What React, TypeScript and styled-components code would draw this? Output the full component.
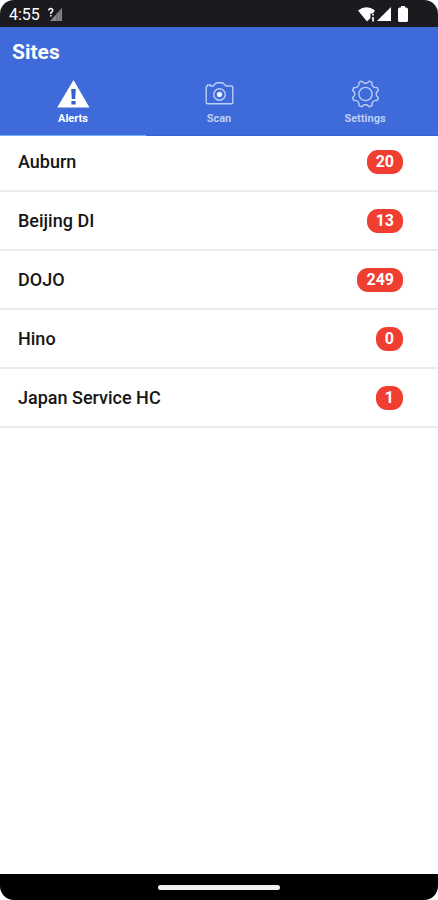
import React from "react";
import styled, { createGlobalStyle } from "styled-components";

const Global = createGlobalStyle`
  *, *::before, *::after { box-sizing: border-box; }
  body { margin: 0; background: #fff; font-family: Roboto, "Liberation Sans", sans-serif; }
`;

const Phone = styled.div`
  display: flex;
  flex-direction: column;
  min-height: 100vh;
  border-radius: 14px;
  overflow: hidden;
  background: #fff;
`;

const StatusBar = styled.div`
  display: flex;
  align-items: center;
  justify-content: space-between;
  height: 27px;
  padding: 1px 30px 0 9px;
  background: #1b1b1f;
  color: #fff;
  font-size: 16px;
`;

const StatusGroup = styled.div<{ $gap: number }>`
  display: flex;
  align-items: center;
  gap: ${(p) => p.$gap}px;
`;

const Header = styled.header`
  background: #3e6bd9;
  color: #fff;
`;

const Title = styled.h1`
  margin: 0;
  padding: 12px 12px 0;
  font-size: 21px;
  line-height: 26px;
  font-weight: 700;
`;

const Tabs = styled.nav`
  display: grid;
  grid-template-columns: repeat(3, 1fr);
`;

const Tab = styled.button<{ $active?: boolean }>`
  display: flex;
  flex-direction: column;
  align-items: center;
  gap: 4px;
  height: 71px;
  padding: 15px 0 0;
  border: 0;
  border-bottom: 1px solid ${(p) => (p.$active ? "#6fb0ff" : "#3563d4")};
  background: none;
  color: ${(p) => (p.$active ? "#fff" : "#bccdf6")};
  font: 700 11px/14px Roboto, "Liberation Sans", sans-serif;
`;

const List = styled.ul`
  flex: 1;
  margin: 0;
  padding: 0;
  list-style: none;
`;

const Row = styled.li`
  display: flex;
  align-items: center;
  justify-content: space-between;
  padding: 17px 35px 16px 18px;
  border-bottom: 2px solid #ececed;
  color: #161616;
  font-size: 18px;
  line-height: 24px;
  font-weight: 500;
  &:first-child { padding-top: 14px; }
`;

const Badge = styled.span`
  min-width: 27px;
  padding: 0 9px;
  border-radius: 11px;
  background: #f03e30;
  color: #fff;
  font-size: 16px;
  line-height: 24px;
  font-weight: 700;
  text-align: center;
`;

const NavBar = styled.div`
  display: flex;
  justify-content: center;
  align-items: center;
  height: 26px;
  background: #000;
`;

const Handle = styled.div`
  width: 28%;
  height: 5px;
  border-radius: 3px;
  background: #f2f2f2;
`;

const AlertIcon = () => (
  <svg width="34" height="28" viewBox="0 0 34 28" aria-hidden="true">
    <path d="M17.500 0 33.500 27.500H1.200Z" fill="#fff" />
    <path d="M15.200 9h4.600l-.6 10h-3.400zM15.400 21h4.200v3.400h-4.200z" fill="#3460cf" />
  </svg>
);

const CameraIcon = () => (
  <svg width="34" height="28" viewBox="0 0 34 28" fill="none" stroke="currentColor" strokeWidth="1.4" strokeLinejoin="round" aria-hidden="true">
    <path d="M5.500 6V5h3v1h2.600l2.700-2.700q.6-.6 1.400-.6h4.600q.8 0 1.400.6L23.900 6H29.500q1.300 0 1.300 1.300v15.200q0 1.300-1.300 1.300h-24q-1.300 0-1.300-1.300V7.300Q4.200 6 5.500 6Z" />
    <circle cx="17.500" cy="14.500" r="5.800" />
    <circle cx="17.500" cy="14.500" r="2" fill="#fff" stroke="#dfe8ff" />
  </svg>
);

const gearPoint = (degrees: number, radius: number) => {
  const a = (degrees * Math.PI) / 180;
  return `${(14.5 + radius * Math.sin(a)).toFixed(2)} ${(14 - radius * Math.cos(a)).toFixed(2)}`;
};

const gearOutline =
  Array.from({ length: 8 }, (_, i) => {
    const a = i * 45;
    return `${i ? "L" : "M"}${gearPoint(a - 16, 13.4)}Q${gearPoint(a - 11, 10.6)} ${gearPoint(a, 10.8)}Q${gearPoint(a + 11, 10.6)} ${gearPoint(a + 16, 13.4)}`;
  }).join("") + "Z";

const GearIcon = () => (
  <svg width="29" height="28" viewBox="0 0 29 28" fill="none" stroke="currentColor" strokeWidth="1.4" strokeLinejoin="round" aria-hidden="true">
    <path d={gearOutline} />
    <circle cx="14.500" cy="14" r="6.600" />
  </svg>
);

const NoSignalIcon = () => (
  <svg width="15" height="15" viewBox="0 0 15 15" aria-hidden="true">
    <path d="M14 1v13H2Z" fill="#88888c" />
    <path d="M9 6v8M12 3v11" stroke="#5d5d62" />
    <path d="M.8 3.500Q.9 1.500 2.800 1.500T4.700 3.400Q4.700 4.500 2.900 5.600V7M2.900 8v1.500" fill="none" stroke="#fff" strokeWidth="1.500" />
  </svg>
);

const WifiIcon = () => (
  <svg width="18" height="16" viewBox="0 0 18 16" aria-hidden="true">
    <path d="M0 4.500Q8.500-2 17 4.500L15 7.500H12.500V12L9 15.500Z" fill="#fff" />
    <path d="M15 8v1.500M15 11v4.500" stroke="#ddd" strokeWidth="2" />
  </svg>
);

const SignalIcon = () => (
  <svg width="14" height="14" viewBox="0 0 14 14" aria-hidden="true">
    <path d="M14 0v14H0Z" fill="#fff" />
  </svg>
);

const BatteryIcon = () => (
  <svg width="10" height="16" viewBox="0 0 10 16" aria-hidden="true">
    <path d="M3 0h4v1.500h1.500Q10 2 10 3.500v11Q10 16 8.500 16h-7Q0 16 0 14.500v-11Q0 2 1.500 1.500H3Z" fill="#fff" />
  </svg>
);

const sites = [
  { name: "Auburn", alerts: 20 },
  { name: "Beijing DI", alerts: 13 },
  { name: "DOJO", alerts: 249 },
  { name: "Hino", alerts: 0 },
  { name: "Japan Service HC", alerts: 1 },
];

export default function App() {
  return (
    <Phone>
      <Global />
      <StatusBar>
        <StatusGroup $gap={8}>
          <span>4:55</span>
          <NoSignalIcon />
        </StatusGroup>
        <StatusGroup $gap={7}>
          <StatusGroup $gap={1}>
            <WifiIcon />
            <SignalIcon />
          </StatusGroup>
          <BatteryIcon />
        </StatusGroup>
      </StatusBar>
      <Header>
        <Title>Sites</Title>
        <Tabs>
          <Tab type="button" $active aria-current="page">
            <AlertIcon />
            Alerts
          </Tab>
          <Tab type="button">
            <CameraIcon />
            Scan
          </Tab>
          <Tab type="button">
            <GearIcon />
            Settings
          </Tab>
        </Tabs>
      </Header>
      <List>
        {sites.map((site) => (
          <Row key={site.name}>
            <span>{site.name}</span>
            <Badge>{site.alerts}</Badge>
          </Row>
        ))}
      </List>
      <NavBar>
        <Handle />
      </NavBar>
    </Phone>
  );
}
